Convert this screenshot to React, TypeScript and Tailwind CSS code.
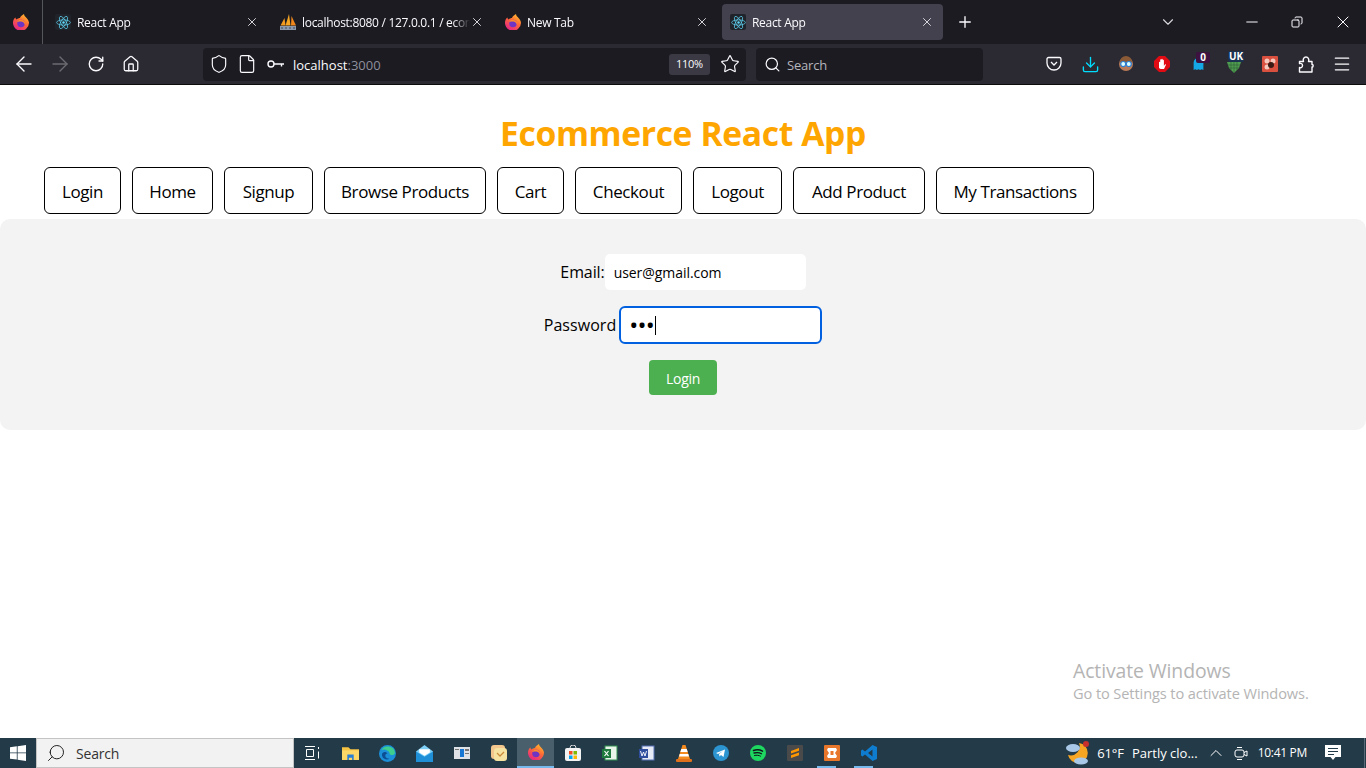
import { useState } from 'react'
import {
  ArrowLeft,
  ArrowRight,
  RotateCw,
  House,
  Shield,
  File,
  Star,
  Search,
  X,
  Plus,
  ChevronDown,
  ChevronUp,
  Minus,
  Copy,
  Download,
  Menu,
} from 'lucide-react'

const font = "font-['Open_Sans','Noto_Sans',sans-serif]"

const Firefox = ({ size = 16 }: { size?: number }) => (
  <svg width={size} height={size} viewBox="0 0 32 32" className="shrink-0">
    <defs>
      <linearGradient id="ffa" x1="0.85" y1="0" x2="0.25" y2="1">
        <stop offset="0" stopColor="#ffc52e" />
        <stop offset="0.45" stopColor="#ff6a35" />
        <stop offset="1" stopColor="#e3208a" />
      </linearGradient>
    </defs>
    <path d="M22 0c0 4 3 5 6 9 3 3 4 7 4 9a16 16 0 1 1-31-6c1-2 2-4 4-5 0 2 1 3 2 4 2-2 5-3 7-3 0-3 4-5 8-8z" fill="url(#ffa)" />
    <circle cx="16" cy="19" r="7.500" fill="#6e34c4" />
    <path d="M8 15c3-4 9-5 13-2 3 2 4 6 3 9-1-4-4-7-8-7-3 0-5 1-8 0z" fill="#ff8a2a" />
  </svg>
)

const ReactLogo = () => (
  <span className="w-4 h-4 bg-[#20232a] rounded-[2px] flex items-center justify-center shrink-0">
    <svg width="15" height="15" viewBox="-12 -12 24 24" fill="none" stroke="#61dafb" strokeWidth="1.1">
      <circle r="2" fill="#61dafb" stroke="none" />
      <ellipse rx="11" ry="4.2" />
      <ellipse rx="11" ry="4.2" transform="rotate(60)" />
      <ellipse rx="11" ry="4.2" transform="rotate(120)" />
    </svg>
  </span>
)

const PmaLogo = () => (
  <svg width="16" height="16" viewBox="0 0 16 16" className="shrink-0">
    <path d="M.5 11.500 4.500 4l1 7.500z" fill="#f29a1f" />
    <path d="M5.500 11.500 9 0l1.500 11.500z" fill="#f5a623" />
    <path d="M11 11.500 11.500 2l4.500 9.500z" fill="#f0861a" />
    <rect x="0" y="12" width="16" height="4" fill="#8c98ab" />
    <path d="M2 13v2M6 13v2M10 13v2M14 13v2" stroke="#3f4a5c" strokeWidth="1" />
  </svg>
)

const KeyIcon = () => (
  <svg width="17" height="16" viewBox="0 0 17 16" fill="none" stroke="#fbfbfe" strokeWidth="1.4" className="shrink-0">
    <circle cx="4" cy="8" r="3" />
    <path d="M7 8h10M14.500 8v2.500" />
  </svg>
)

const Tab = ({
  title,
  icon,
  active,
}: {
  title: string
  icon: React.ReactNode
  active?: boolean
}) => (
  <div
    className={`w-[221px] h-9 mt-1 flex items-center pl-2 pr-[9px] rounded-[4px] ${active ? 'bg-[#42414d]' : ''}`}
  >
    {icon}
    <span className="ml-[6px] flex-1 pt-[1px] text-[12px] tracking-[-0.3px] text-[#fbfbfe] whitespace-nowrap overflow-hidden [mask-image:linear-gradient(to_right,black_90%,transparent)]">
      {title}
    </span>
    <X size={14} strokeWidth={1.6} className="text-[#e0e0e6] shrink-0" />
  </div>
)

const Badge = ({ children, className }: { children: string; className: string }) => (
  <span className={`absolute text-[10px] leading-[11px] font-bold text-white text-center rounded-[2px] ${className}`}>
    {children}
  </span>
)

const Slot = ({ children }: { children: React.ReactNode }) => (
  <div className="relative w-4 h-4 flex items-center justify-center shrink-0">{children}</div>
)

const Extensions = () => (
  <div className="flex items-center gap-[20px]">
    <Slot>
      <svg width="16" height="16" viewBox="0 0 16 16" fill="none" stroke="#fbfbfe" strokeWidth="1.3">
        <path d="M2.500 1.500h11a1.500 1.500 0 0 1 1.500 1.500v4a7 7 0 0 1-14 0V3a1.500 1.500 0 0 1 1.500-1.500z" />
        <path d="M5 6l3 3 3-3" />
      </svg>
    </Slot>
    <Slot>
      <Download size={19} strokeWidth={1.7} className="text-[#00ddff] shrink-0" />
    </Slot>
    <Slot>
      <svg width="16" height="16" viewBox="0 0 16 16">
        <circle cx="8" cy="8" r="7" fill="#b97a57" />
        <path d="M2 6a6 6 0 0 1 12 0z" fill="#8a5a36" />
        <circle cx="5.200" cy="8" r="2.500" fill="#dff" stroke="#2d7fd3" strokeWidth="1.200" />
        <circle cx="10.800" cy="8" r="2.500" fill="#dff" stroke="#2d7fd3" strokeWidth="1.200" />
      </svg>
    </Slot>
    <Slot>
      <svg width="16" height="16" viewBox="0 0 16 16">
        <path d="M5 0h6l5 5v6l-5 5H5l-5-5V5z" fill="#e10b14" />
        <path d="M5 12V6.500c0-1 1.200-1 1.200 0V4c0-1 1.200-1 1.200 0V3.600c0-1 1.300-1 1.300 0V4.500c0-1 1.200-1 1.200 0V10l1-1.500c.6-.6 1.300 0 .9.700L10 13H6.500z" fill="#fff" />
      </svg>
    </Slot>
    <Slot>
      <svg width="13" height="15" viewBox="0 0 16 16" className="absolute left-[2px] top-0">
        <path d="M2 16V7a6 6 0 0 1 12 0v9l-2-1-2 1-2-1-2 1-2-1z" fill="#14a8e6" />
      </svg>
      <Badge className="left-[6px] -top-[4px] w-[14px] bg-[#3d1140]">0</Badge>
    </Slot>
    <Slot>
      <svg width="16" height="16" viewBox="0 0 16 16" className="absolute top-[1px]">
        <path d="M1 5h14l-2 6-5 5-5-5z" fill="#4f9d4f" />
        <path d="M5 5v8M8 5v11M11 5v8M2 8h12M3 11h10" stroke="#2f5d3a" strokeWidth="0.600" />
      </svg>
      <Badge className="left-[2px] -top-[5px] w-4 bg-[#1b3250]">UK</Badge>
    </Slot>
    <Slot>
      <svg width="16" height="16" viewBox="0 0 16 16">
        <rect width="16" height="16" rx="1" fill="#d9503f" />
        <circle cx="5" cy="5" r="2.500" fill="#f4c8bd" />
        <circle cx="11" cy="5" r="2.500" fill="#f4c8bd" />
        <circle cx="5" cy="11" r="2.500" fill="#f4c8bd" />
        <circle cx="9" cy="9" r="3" fill="#3a1a14" />
      </svg>
    </Slot>
    <Slot>
      <svg width="16" height="17" viewBox="0 0 16 17" fill="none" stroke="#fbfbfe" strokeWidth="1.400" strokeLinejoin="round" className="shrink-0">
        <path d="M1.500 16v-4.500c2 .7 3-.5 3-2s-1-2.500-3-2V5.500h4c-1-2.500.5-4.500 2.500-4.500s3.500 2 2.500 4.500h3.500v3c1.500-.5 1.500 3 0 2.500V16z" />
      </svg>
    </Slot>
    <Slot>
      <Menu size={20} strokeWidth={1.500} className="text-[#fbfbfe] shrink-0" />
    </Slot>
  </div>
)

const BrowserChrome = () => (
  <div className="text-[#fbfbfe]">
    <div className="h-11 bg-[#1c1b22] flex">
      <div className="w-[43px] h-11 border-r border-[#55555c] flex items-center justify-center">
        <Firefox />
      </div>
      <div className="flex pl-1 gap-1">
        <Tab title="React App" icon={<ReactLogo />} />
        <Tab title="localhost:8080 / 127.0.0.1 / ecommerce" icon={<PmaLogo />} />
        <Tab title="New Tab" icon={<Firefox />} />
        <Tab title="React App" icon={<ReactLogo />} active />
      </div>
      <div className="flex items-center ml-[13px]">
        <Plus size={18} strokeWidth={1.800} />
      </div>
      <div className="flex-1 flex items-center">
        <ChevronDown size={18} strokeWidth={1.500} className="ml-[185px] text-[#d8d8dc]" />
        <Minus size={18} strokeWidth={1.330} className="ml-[66px]" />
        <Copy size={12} strokeWidth={2} className="ml-[30px] -scale-x-100" />
        <X size={20} strokeWidth={1.200} className="ml-[30px]" />
      </div>
    </div>
    <div className="h-[41px] bg-[#2b2a33] border-b border-[#0c0c0d] flex items-center">
      <div className="w-[203px] flex items-center pl-[12px] shrink-0">
        <ArrowLeft size={24} strokeWidth={1.400} />
        <ArrowRight size={24} strokeWidth={1.400} className="ml-[12px] text-[#6c6b72]" />
        <RotateCw size={18} strokeWidth={1.800} className="ml-[15px]" />
        <House size={18} strokeWidth={1.700} className="ml-[17px]" />
      </div>
      <div className="w-[543px] h-[33px] bg-[#1c1b22] rounded-[4px] flex items-center pl-[6px] pr-[6px]">
        <Shield size={20} strokeWidth={1.400} />
        <File size={20} strokeWidth={1.400} className="ml-[8px]" />
        <div className="ml-[10px]">
          <KeyIcon />
        </div>
        <span className="ml-[9px] pt-[3px] text-[13px] tracking-[0px]">
          localhost<span className="text-[#8f8f9d]">:3000</span>
        </span>
        <span className="ml-auto w-[41px] h-[21px] bg-[#3a3944] rounded-[3px] text-[11px] tracking-[-0.3px] flex items-center justify-center">
          110%
        </span>
        <Star size={20} strokeWidth={1.400} className="ml-[10px]" />
      </div>
      <div className="ml-[10px] w-[227px] h-[33px] bg-[#1c1b22] rounded-[4px] flex items-center pl-[8px]">
        <Search size={17} strokeWidth={1.700} />
        <span className="ml-[6px] pt-[3px] text-[13px] tracking-[-0.2px] text-[#b5b5bc]">Search</span>
      </div>
      <div className="ml-[63px]">
        <Extensions />
      </div>
    </div>
  </div>
)

const navLinks = [
  { label: 'Login', width: 'w-[77px]' },
  { label: 'Home', width: 'w-[81px]' },
  { label: 'Signup', width: 'w-[89px]' },
  { label: 'Browse Products', width: 'w-[162px]' },
  { label: 'Cart', width: 'w-[67px]' },
  { label: 'Checkout', width: 'w-[107px]' },
  { label: 'Logout', width: 'w-[89px]' },
  { label: 'Add Product', width: 'w-[132px]' },
  { label: 'My Transactions', width: 'w-[158px]' },
]

const LoginPage = () => {
  const [email, setEmail] = useState('user@gmail.com')
  const [password, setPassword] = useState('123')

  return (
    <div className="flex-1 bg-white text-black">
      <h1 className="pt-[26px] text-center text-[33.700px] leading-[44px] font-bold tracking-[-0.4px] text-[#ffa500]">
        Ecommerce React App
      </h1>
      <nav className="mt-[12px] pl-[44px] flex gap-[11px]">
        {navLinks.map((link) => (
          <a
            key={link.label}
            href="#"
            className={`${link.width} h-[47px] pt-[2px] flex items-center justify-center border border-black rounded-[6px] text-[17px] tracking-[-0.4px] whitespace-nowrap`}
          >
            {link.label}
          </a>
        ))}
      </nav>
      <form className="mt-[5px] h-[211px] bg-[#f3f3f3] rounded-[10px] pt-[35px] flex flex-col items-center">
        <div className="flex items-center text-[16px] tracking-[-0.1px]">
          <label>Email:</label>
          <input
            value={email}
            onChange={(e) => setEmail(e.target.value)}
            className="w-[201px] h-9 px-[9px] bg-white rounded-[5px] text-[14px] tracking-[-0.05px] outline-none"
          />
        </div>
        <div className="flex items-center mt-4 text-[16px] tracking-[0.05px]">
          <label>Password</label>
          <div className="w-[203px] h-[38px] ml-[3px] px-[8px] bg-white rounded-[6px] border-2 border-[#0060df] flex items-center">
            <input
              type="password"
              value={password}
              onChange={(e) => setPassword(e.target.value)}
              className="w-[26px] h-6 text-[24px] tracking-[-0.8px] outline-none"
            />
            <span className="w-px h-[19px] bg-black" />
          </div>
        </div>
        <button
          type="button"
          className="mt-4 w-[68px] h-[35px] pt-[1px] bg-[#4caf50] text-white text-[14px] tracking-[-0.3px] rounded-[4px]"
        >
          Login
        </button>
      </form>
    </div>
  )
}

const taskApps = [
  <svg key="folder" width="17" height="17" viewBox="0 0 16 16">
    <path d="M0 2h6l2 2h8v10H0z" fill="#f6c343" />
    <rect y="5" width="16" height="9" fill="#ffd867" />
    <path d="M5 9h6v5H9.500v-2h-3v2H5z" fill="#2a7fd4" />
  </svg>,
  <svg key="edge" width="17" height="17" viewBox="0 0 16 16">
    <circle cx="8" cy="8" r="8" fill="#1b8fd8" />
    <path d="M2 5a7 7 0 0 1 13 2c0 3-5 3-5 1 0-3-6-5-8-3z" fill="#3ecf8e" />
    <path d="M8 8c-3 0-3 5 2 5-5 2-8-2-7-5 1-2 4-2 5 0z" fill="#0c4f94" />
  </svg>,
  <svg key="mail" width="17" height="17" viewBox="0 0 16 16">
    <rect y="6" width="16" height="10" fill="#1f8fd8" />
    <path d="M0 6l8-6 8 6-8 5z" fill="#7ed0f7" />
    <path d="M3 4h10v3l-5 3-5-3z" fill="#fff" />
  </svg>,
  <svg key="news" width="16" height="12" viewBox="0 0 16 12">
    <rect width="16" height="12" fill="#dfe3e8" />
    <rect x="6" y="2" width="4" height="8" fill="#1877d2" />
    <rect x="1" y="2" width="4" height="1" fill="#777" />
    <rect x="11" y="2" width="4" height="2" fill="#777" />
    <rect x="11" y="6" width="4" height="1" fill="#777" />
  </svg>,
  <svg key="sticky" width="16" height="16" viewBox="0 0 16 16">
    <rect x="0" y="0" width="14" height="14" rx="3" fill="#f2c68c" />
    <rect x="3" y="3" width="13" height="13" rx="3" fill="#f7e3a1" />
    <path d="M6 8l3 3 4-4" stroke="#c98c3c" strokeWidth="1.300" fill="none" />
  </svg>,
  <Firefox key="firefox" />,
  <svg key="store" width="16" height="16" viewBox="0 0 16 16">
    <rect y="3" width="16" height="13" rx="2" fill="#f3f3f3" />
    <path d="M5 3a3 3 0 0 1 6 0" stroke="#ddd" fill="none" />
    <rect x="4" y="6" width="3.500" height="3.500" fill="#f25022" />
    <rect x="8.500" y="6" width="3.500" height="3.500" fill="#7fba00" />
    <rect x="4" y="10.500" width="3.500" height="3.500" fill="#00a4ef" />
    <rect x="8.500" y="10.500" width="3.500" height="3.500" fill="#ffb900" />
  </svg>,
  <svg key="excel" width="16" height="16" viewBox="0 0 16 16">
    <rect x="3" y="1" width="12" height="14" fill="#e8f3ea" stroke="#2f8f4e" />
    <rect x="0" y="4" width="9" height="9" fill="#1f7a3e" />
    <path d="M2.500 6l4 5M6.500 6l-4 5" stroke="#fff" strokeWidth="1.200" />
  </svg>,
  <svg key="word" width="16" height="16" viewBox="0 0 16 16">
    <rect x="3" y="1" width="12" height="14" fill="#e6ebf5" stroke="#5470b5" />
    <rect x="0" y="4" width="9" height="9" fill="#2f4f9e" />
    <path d="M1.500 6l1.500 5 1.500-4 1.500 4 1.500-5" stroke="#fff" strokeWidth="0.900" fill="none" />
  </svg>,
  <svg key="vlc" width="16" height="17" viewBox="0 0 16 17">
    <path d="M6.500 0h3L14 14H2z" fill="#f58a1f" />
    <path d="M5.300 4h5.400l1 3H4.300zM3.700 9h8.600l.7 2.500H3z" fill="#fff" />
    <rect x="0" y="14" width="16" height="3" rx="1" fill="#e0711a" />
  </svg>,
  <svg key="telegram" width="16" height="16" viewBox="0 0 16 16">
    <circle cx="8" cy="8" r="8" fill="#2b94d1" />
    <path d="M3 8l9-3.500L10.500 12 8 10l-1.500 1.500L6 9l4-3-5 3z" fill="#fff" />
  </svg>,
  <svg key="spotify" width="16" height="16" viewBox="0 0 16 16" fill="none" stroke="#10141a" strokeLinecap="round">
    <circle cx="8" cy="8" r="8" fill="#1ed760" stroke="none" />
    <path d="M3.500 5.500c3-1 6.500-.7 9 .7" strokeWidth="1.500" />
    <path d="M4 8c2.500-.7 5.500-.5 7.500.7" strokeWidth="1.300" />
    <path d="M4.500 10.500c2-.5 4.500-.3 6 .6" strokeWidth="1" />
  </svg>,
  <svg key="sublime" width="16" height="16" viewBox="0 0 16 16">
    <rect width="16" height="16" rx="1" fill="#4a4a4a" />
    <path d="M4 6l8-3v2.800L4 8.500zM12 7.500v2.700l-8 2.800v-2.800l3-1z" fill="#ff9800" />
  </svg>,
  <svg key="xampp" width="16" height="16" viewBox="0 0 16 16">
    <rect width="16" height="16" rx="1" fill="#e8762b" />
    <path d="M4 3h8l1 2-2 3 2 3-1 2H4l-1-2 2-3-2-3z" fill="#fff" />
    <rect x="6.500" y="6" width="3" height="4" fill="#e8762b" />
  </svg>,
  <svg key="vscode" width="16" height="16" viewBox="0 0 16 16" fill="#0e7ccf">
    <path d="M11.500 0 16 2v12l-4.500 2L4 9.500 1.500 11.500 0 10.500V5.500l1.500-1L4 6.500zM11.500 4.500 7 8l4.500 3.500z" />
  </svg>,
]

const Taskbar = () => (
  <div className="h-[30px] bg-[#233a48] flex items-center text-white">
    <div className="w-9 flex items-center justify-center">
      <svg width="16" height="16" viewBox="0 0 16 16" fill="#fff">
        <path d="M0 2.300 6.800 1.300v6.200H0zM7.600 1.200 16 0v7.500H7.600zM0 8.300h6.800v6.300L0 13.700zM7.600 8.300H16V16l-8.400-1.200z" />
      </svg>
    </div>
    <div className="w-[258px] h-[30px] bg-[#f2f2f2] border border-[#c4c4c4] flex items-center pl-[9px]">
      <Search size={20} strokeWidth={1.200} className="text-[#222] -scale-x-100" />
      <span className="ml-[10px] pt-[1px] text-[14px] tracking-[-0.2px] text-[#333]">Search</span>
    </div>
    <div className="w-[36px] flex items-center justify-center">
      <svg width="16" height="16" viewBox="0 0 16 16" fill="none" stroke="#fff" strokeWidth="1">
        <path d="M1 1.500h10M1 14.500h10M2.500 4.500h7v7h-7zM14.500 2v2M14.500 6.500v7" />
      </svg>
    </div>
    <div className="flex ml-[2px]">
      {taskApps.map((icon, i) => (
        <div
          key={i}
          className={`relative w-[37px] h-[30px] flex items-center justify-center ${i === 5 ? 'bg-[#4a5f6c] border-b-2 border-[#76b9ed]' : ''}`}
        >
          {icon}
          {i >= 13 && <span className="absolute left-1 bottom-0 w-[19px] h-[2px] bg-[#76b9ed]" />}
        </div>
      ))}
    </div>
    <div className="ml-auto flex items-center text-[13px] tracking-[-0.1px]">
      <svg width="26" height="26" viewBox="0 0 26 26" className="mr-[6px]">
        <path d="M14 3a10 10 0 1 1-11 12 9 9 0 0 0 11-12z" fill="#f6a623" />
        <circle cx="21" cy="4" r="3" fill="#c8302c" />
        <ellipse cx="8" cy="8" rx="7" ry="4" fill="#a9c8e8" />
        <ellipse cx="16" cy="21" rx="7" ry="3.500" fill="#a9c8e8" />
      </svg>
      <span className="pt-[1px]">61°F</span>
      <span className="ml-[8px] pt-[1px] tracking-[0px]">Partly clo...</span>
      <ChevronUp size={20} strokeWidth={1.200} className="ml-[8px]" />
      <svg width="16" height="16" viewBox="0 0 16 16" fill="none" stroke="#fff" strokeWidth="1" className="ml-[7px]">
        <rect x="2" y="5" width="9" height="7" rx="2" />
        <path d="M11 7.500l3-1.500v5l-3-1.500M4 2.500h5M4 14.500h5" />
      </svg>
      <span className="ml-[9px] text-[12px] tracking-[-0.3px]">10:41 PM</span>
      <svg width="16" height="16" viewBox="0 0 16 16" fill="#fff" className="ml-[18px]">
        <path d="M0 0h16v12h-5.500L8 15l-2.500-3H0zM3 3h10v1H3zM3 6h10v1H3zM3 9h6v1H3z" fillRule="evenodd" />
      </svg>
      <div className="w-px h-[30px] ml-[23px] mr-[1px] bg-[#5a6b78]" />
    </div>
  </div>
)

const App = () => {
  return (
    <div className={`h-[768px] relative overflow-hidden flex flex-col ${font}`}>
      <BrowserChrome />
      <LoginPage />
      <div className="absolute left-[1073px] top-[659px] text-[#b4b4b4]">
        <div className="text-[19.400px] leading-[24px] tracking-[-0.1px]">Activate Windows</div>
        <div className="text-[14.600px] leading-[20px] tracking-[-0.1px]">Go to Settings to activate Windows.</div>
      </div>
      <Taskbar />
    </div>
  )
}

export default App
